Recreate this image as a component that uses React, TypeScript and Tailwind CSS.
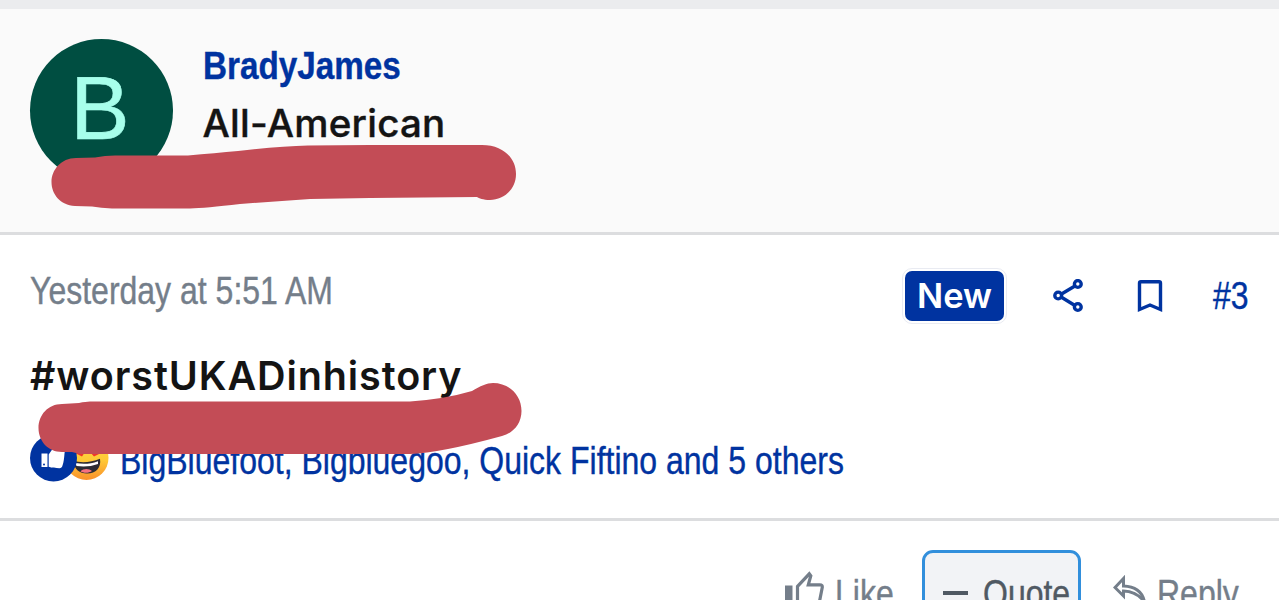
import type { ReactNode } from 'react'

function ShareIcon() {
  return (
    <svg className="h-[34px] w-[32px]" viewBox="0 0 32 34" fill="none" stroke="#0033a0" strokeWidth="3.400">
      <path d="M8.5 15 21.5 7.200M8.5 18.200l13 8" />
      <circle cx="5.200" cy="16.500" r="3.400" />
      <circle cx="24.800" cy="5" r="3.400" />
      <circle cx="24.800" cy="28" r="3.400" />
    </svg>
  )
}

function BookmarkIcon() {
  return (
    <svg className="h-[34px] w-[26px]" viewBox="0 0 26 34" fill="none" stroke="#0033a0" strokeWidth="3.400">
      <path d="M2.500 30.500V4.200a1.400 1.400 0 0 1 1.400-1.400h18.200a1.400 1.400 0 0 1 1.400 1.400v26.300L13 26z" />
    </svg>
  )
}

function Reactions() {
  return (
    <svg className="h-[48px] w-[80px] shrink-0" viewBox="0 0 80 48">
      <defs>
        <linearGradient id="face" x1="0" y1="0" x2="0" y2="1">
          <stop offset="0" stopColor="#ffe04a" />
          <stop offset=".55" stopColor="#ffc936" />
          <stop offset="1" stopColor="#f9902b" />
        </linearGradient>
      </defs>
      <circle cx="56.500" cy="24" r="22" fill="url(#face)" />
      <path d="M44 12h11v6l-3 4.500-8-4zM60 12h11v7l-7 3.500-4-4.500z" fill="#f0352b" />
      <path d="M43 27c9 2 18 1.500 27-2.200 1.500 9-4 14.700-13 14.700-7.500 0-12.500-4-14-12.500z" fill="#2b2b33" />
      <path d="M45.500 29c8 1.500 15 1 22.500-1.800v2.800c-7 2.500-14 3-21.500 2z" fill="#fff" />
      <path d="M50.500 37.300c3-3 8.500-3 11.500-.3-3 2.200-8.500 2.400-11.500.3z" fill="#f5707f" />
      <circle cx="23.500" cy="24" r="23.500" fill="#0033a0" />
      <path d="M11.500 19.500h6v13.500h-6z" fill="#fff" />
      <circle cx="14" cy="30.500" r="1" fill="#0033a0" />
      <path d="M18.700 20.500 26 10c3-1 4 2 3.500 6.500h3.500c1.500 0 2 1.500 1.500 3-.3 4.500-.8 9-2 12-.4 2-1.500 2.700-3 2.700-4 0-7.500-.2-10.800-1.400z" fill="#fff" />
    </svg>
  )
}

function LikeIcon() {
  return (
    <svg className="h-[40px] w-[40px]" viewBox="0 0 40 40">
      <path d="M0 14.500h7.500V36H0z" fill="#747e8a" />
      <path d="M12.500 35V15.500L24.300 2.800l1.500 2-2.500 9h11.500q3 0 2.400 3L34 33q-.6 2-3 2z" fill="none" stroke="#747e8a" strokeWidth="3.200" />
    </svg>
  )
}

function ReplyIcon() {
  return (
    <svg className="h-[36px] w-[34px]" viewBox="0 0 34 36" fill="none" stroke="#747e8a" strokeWidth="3">
      <path d="M10.500 3.500 2 12.500l8.500 8.500v-5c8 0 15 3 21 11-2-10-9-15.500-21-16z" />
    </svg>
  )
}

// Condensed lettering, squeezed from the left edge
function Narrow({ children }: { children: ReactNode }) {
  return (
    <span className="inline-block origin-left scale-x-[0.842] whitespace-nowrap font-['Liberation_Sans',Arial,sans-serif] [-webkit-text-stroke:0.4px_currentColor]">
      {children}
    </span>
  )
}

function Marker({ d }: { d: string }) {
  return (
    <svg className="pointer-events-none absolute left-0 top-0 h-[600px] w-[1279px]" viewBox="0 0 1279 600">
      <path d={d} fill="#c34c56" />
    </svg>
  )
}

export default function App() {
  return (
    <main className="relative h-[600px] w-[1279px] overflow-hidden bg-white font-['Inter',sans-serif]">
      <div className="h-[9px] bg-[#ebecee]" />

      {/* Author */}
      <header className="flex h-[226px] border-b-[3px] border-[#dcdddf] bg-[#fafafa] pl-[29.500px] pt-[29.500px]">
        <div className="flex h-[143px] w-[143px] items-center justify-center rounded-full bg-[#004e41] pb-[3px] pr-[2px] font-['Liberation_Sans',Arial,sans-serif] text-[89px] leading-none text-[#a7ffeb] [-webkit-text-stroke:0.6px_#a7ffeb]">
          B
        </div>
        <div className="ml-[30px] whitespace-nowrap">
          <h4 className="mt-[3.500px] h-[47.500px] text-[39.500px] font-bold leading-[46px] text-[#0033a0]">
            <Narrow>BradyJames</Narrow>
          </h4>
          <h5 className="mt-[9px] text-[38.500px] font-medium leading-[48px] tracking-[0.250px] text-[#141414] [-webkit-text-stroke:0.4px_#141414]">All-American</h5>
        </div>
      </header>

      {/* Post */}
      <section className="h-[286px] border-b-[3px] border-[#dcdddf] pl-[30px] pr-[30px]">
        <div className="flex h-[112px] items-start justify-between pt-[31px]">
          <time className="text-[38px] leading-[48px] text-[#747e8a]">
            <Narrow>Yesterday at 5:51 AM</Narrow>
          </time>
          <div className="flex items-center pt-[4px] text-[#0033a0]">
            <span className="flex h-[50px] w-[99px] items-center justify-center rounded-[7px] bg-[#0033a0] pt-px text-[34.500px] font-semibold text-white outline-1 outline-offset-2 outline-[#e9ebf2]">
              New
            </span>
            <span className="ml-[49px]"><ShareIcon /></span>
            <span className="ml-[52px]"><BookmarkIcon /></span>
            <span className="ml-[50px] w-[36px] text-[38px] leading-[50px]"><Narrow>#3</Narrow></span>
          </div>
        </div>
        <p className="h-[87px] pt-[4px] text-[39.500px] font-semibold leading-[50px] tracking-[0.900px] text-[#141414]">#worstUKADinhistory</p>
        <div className="flex h-[50px] items-start">
          <Reactions />
          <span className="ml-[10px] text-[38px] leading-[52px] text-[#0033a0]">
            <Narrow>BigBluefoot, Bigbluegoo, Quick Fiftino and 5 others</Narrow>
          </span>
        </div>
      </section>

      {/* Actions */}
      <footer className="flex h-[79px] items-start overflow-hidden pl-[785px] text-[38px] leading-[48px] text-[#747e8a]">
        <span className="pt-[50px]"><LikeIcon /></span>
        <span className="ml-[10px] w-[60px] pt-[48px]"><Narrow>Like</Narrow></span>
        <button className="ml-[27px] mt-[29px] flex h-[90px] w-[159px] shrink-0 items-start rounded-[11px] border-[3px] border-[#328fdc] bg-[#f2f3f6] pl-[18px] text-[#505963]">
          <span className="mt-[38px] h-[4px] w-[25px] shrink-0 bg-[#505963]" />
          <span className="ml-[15px] w-[90px] pt-[16px] text-left"><Narrow>Quote</Narrow></span>
        </button>
        <span className="ml-[32px] shrink-0 pt-[54px]"><ReplyIcon /></span>
        <span className="ml-[10px] w-[82px] pt-[48px]"><Narrow>Reply</Narrow></span>
      </footer>

      {/* Marker strokes */}
      <Marker d="M76 158L95 157.500Q105 155.500 115 155.500H188Q215 153 238 151Q280 146 308 145.500L370 145H482C503 145 516 158 516 174C516 190 503 200 490 200C483 200 479 198 477 197L370 198L310 199L240 204Q205 208 190 208.500H112Q101 208 92 206.500L75 206C60 205 51.500 194 51.500 182C51.500 170 61 158 76 158Z" />
      <Marker d="M62 404L79 403Q86 401.500 90 401.500H410Q445 399 472 391C480 386 487 383 493 383C509 383 521.500 395 521.500 411C521.500 424 513 433 502 436Q440 453 410 454H80L72 452H62C48 452 38.500 441 38.500 428C38.500 415 48 404 62 404Z" />
    </main>
  )
}
